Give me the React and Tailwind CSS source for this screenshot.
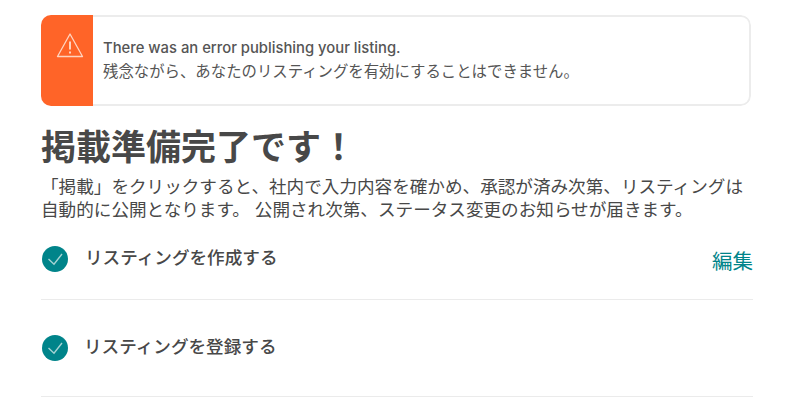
const font = "font-['Inter','Noto_Sans_CJK_JP',sans-serif]";

function Check() {
  return (
    <svg viewBox="0 0 26 26" className="w-[26px] h-[26px] shrink-0 ml-px">
      <circle cx="13" cy="13" r="13" fill="#00848a" />
      <path d="M6.5 13l5.5 5.2L20 8" fill="none" stroke="#a5d3d3" strokeWidth="1.4" />
    </svg>
  );
}

export default function App() {
  return (
    <div className={`w-[800px] h-[419px] overflow-hidden bg-white pl-[41px] pt-[15px] ${font}`}>
      <div className="w-[712px]">
        <div className="flex h-[91px] w-[710px] rounded-[10px] overflow-hidden">
          <div className="w-[52px] bg-[#ff6428] pt-[17px] pl-[15px] shrink-0">
            <svg viewBox="0 0 28 26" className="w-7 h-[26px]" fill="none" stroke="#ffd3bf" strokeWidth="1.3">
              <path d="M14 2L1.5 24.5h25z" strokeLinejoin="round" />
              <path d="M14 9.5v8M14 19.5v2" strokeWidth="2" />
            </svg>
          </div>
          <div className="flex-1 border-2 border-l-0 border-[#ececec] rounded-r-[10px] pl-[10px] pt-[19px] leading-[24px] text-[#555]">
            <div className="text-[14.8px] font-medium">There was an error publishing your listing.</div>
            <div className="text-[15.4px]">残念ながら、あなたのリスティングを有効にすることはできません。</div>
          </div>
        </div>
        <h1 className="mt-[19px] text-[35px] leading-[44px] font-bold text-[#484848]">掲載準備完了です！</h1>
        <p className="mt-[6px] text-[17.6px] leading-[23px] text-[#484848]">
          「掲載」をクリックすると、社内で入力内容を確かめ、承認が済み次第、リスティングは自動的に公開となります。 公開され次第、ステータス変更のお知らせが届きます。
        </p>
        <div className="mt-[13px] h-[66px] flex items-start justify-between border-b border-[#ebebeb] pt-[12px]">
          <div className="flex items-center gap-[17px]">
            <Check />
            <span className="text-[17.6px] font-medium text-[#484848] -mt-0.5">リスティングを作成する</span>
          </div>
          <a className="text-[20.5px] leading-7 text-[#00848a] mt-0.5">編集</a>
        </div>
        <div className="h-[97px] border-b border-[#ebebeb] pt-[35px]">
          <div className="flex items-center gap-[16px]">
            <Check />
            <span className="text-[17.6px] font-medium text-[#484848] -mt-0.5">リスティングを登録する</span>
          </div>
        </div>
      </div>
    </div>
  );
}
